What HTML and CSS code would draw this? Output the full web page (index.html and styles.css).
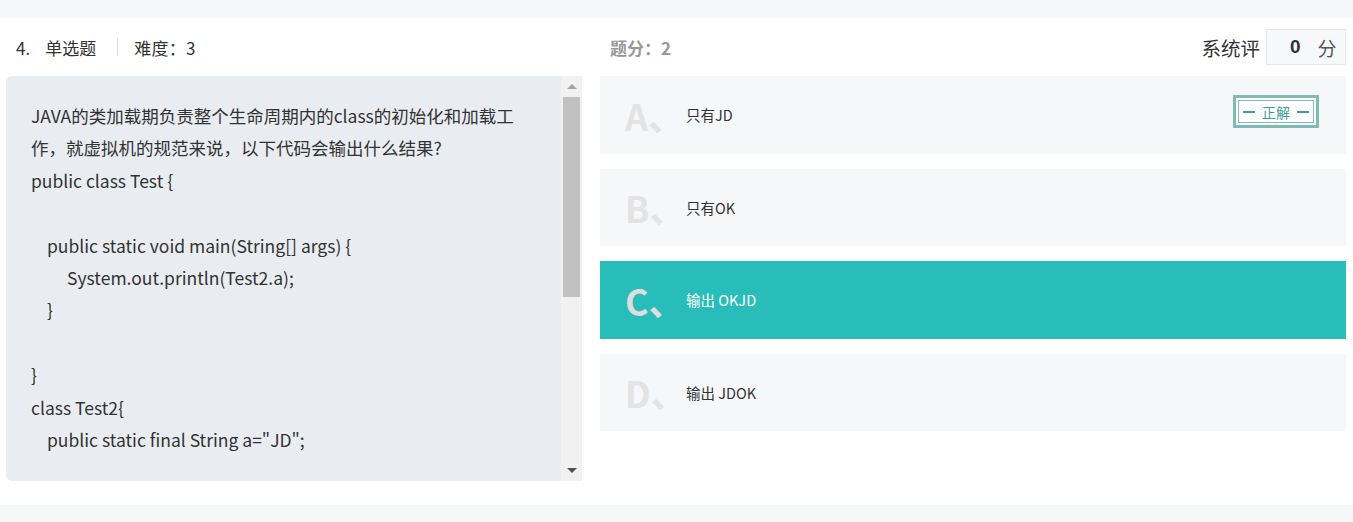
FILE: index.html
```html
<!DOCTYPE html>
<html lang="zh-CN">
<head>
<meta charset="utf-8">
<title>单选题</title>
<link rel="stylesheet" href="styles.css">
</head>
<body>
<div class="topband"></div>
<div class="main">
  <div class="head-left">
    <span class="num">4.</span>
    <span class="type">单选题</span>
    <span class="divider"></span>
    <span class="diff">难度：3</span>
  </div>
  <div class="head-right">
    <span class="score">题分：2</span>
    <div class="grade">
      <span class="grade-label">系统评</span>
      <div class="grade-box"><b>0</b><span>分</span></div>
    </div>
  </div>

  <div class="stem">
    <div class="stem-text">
      <p class="line">JAVA的类加载期负责整个生命周期内的class的初始化和加载工作，就虚拟机的规范来说，以下代码会输出什么结果?</p>
      <p class="line">public class Test {</p>
      <p class="line empty"></p>
      <p class="line in1">public static void main(String[] args) {</p>
      <p class="line in2">System.out.println(Test2.a);</p>
      <p class="line in1">}</p>
      <p class="line empty"></p>
      <p class="line">}</p>
      <p class="line">class Test2{</p>
      <p class="line in1">public static final String a="JD";</p>
    </div>
    <div class="scrollbar">
      <span class="arrow up"></span>
      <div class="track"><div class="thumb"></div></div>
      <span class="arrow down"></span>
    </div>
  </div>

  <div class="options">
    <div class="option">
      <span class="letter">A、</span>
      <span class="opt-text">只有JD</span>
      <div class="badge"><span class="dash"></span><span>正解</span><span class="dash"></span></div>
    </div>
    <div class="option">
      <span class="letter">B、</span>
      <span class="opt-text">只有OK</span>
    </div>
    <div class="option selected">
      <span class="letter">C、</span>
      <span class="opt-text">输出 OKJD</span>
    </div>
    <div class="option">
      <span class="letter">D、</span>
      <span class="opt-text">输出 JDOK</span>
    </div>
  </div>
</div>
<div class="bottomband"></div>
</body>
</html>
```

FILE: styles.css
```css
* { box-sizing: border-box; }
html, body { margin: 0; padding: 0; }
body {
  width: 1353px;
  height: 522px;
  overflow: hidden;
  background: #fff;
  font-family: "Microsoft YaHei", "Noto Sans CJK SC", sans-serif;
  color: #333;
  display: flex;
  flex-direction: column;
}
.topband { height: 18px; background: #f6f7f9; flex: none; }
.bottomband { height: 17px; background: #f6f7f9; margin-top: auto; flex: none; }

.main {
  display: grid;
  grid-template-columns: 576px 746px;
  grid-template-rows: 58px 405px;
  column-gap: 18px;
  padding: 0 7px 0 6px;
}

.head-left {
  display: flex;
  align-items: center;
  padding-left: 10px;
  font-size: 17px;
  color: #333;
}
.head-left .num { margin-right: 15px; }
.head-left .divider {
  width: 1px;
  height: 18px;
  background: #ddd;
  margin: 0 16px 0 21px;
}
.head-left .diff { letter-spacing: 0.3px; }
.head-right {
  display: flex;
  align-items: center;
  justify-content: space-between;
  padding-left: 10px;
}
.score { font-size: 17px; font-weight: bold; color: #999; }
.grade { display: flex; align-items: center; }
.grade-label { font-size: 19.5px; color: #333; margin-right: 6px; }
.grade-box {
  width: 80px;
  height: 36px;
  border: 1px solid #e6e6e6;
  background: #f7f8fa;
  display: flex;
  align-items: center;
  padding-left: 23px;
  font-size: 19px;
}
.grade-box b { font-family: "Liberation Sans", Arial, sans-serif; font-weight: bold; color: #333; margin-right: 17px; }
.grade-box span { color: #555; }

.stem {
  display: flex;
  background: #e9ecf1;
  border-radius: 6px 0 0 6px;
  overflow: hidden;
}
.stem-text {
  flex: 1;
  padding: 24px 40px 0 25px;
  font-size: 17.5px;
  line-height: 32.4px;
  color: #333;
}
.line { margin: 0; min-height: 32.4px; }
.in1 { padding-left: 16px; }
.in2 { padding-left: 36px; }

.scrollbar {
  width: 21px;
  flex: none;
  background: #f1f1f1;
  display: flex;
  flex-direction: column;
  align-items: center;
}
.arrow {
  width: 0;
  height: 0;
  border-left: 5px solid transparent;
  border-right: 5px solid transparent;
  flex: none;
}
.arrow.up { border-bottom: 5px solid #a3a3a3; margin: 8px 0 8px; }
.arrow.down { border-top: 5px solid #505050; margin: 0 0 8px; }
.track { flex: 1; width: 100%; display: flex; justify-content: center; }
.thumb { width: 17px; height: 200px; background: #c1c1c1; }

.options {
  display: flex;
  flex-direction: column;
  gap: 15px;
}
.option {
  position: relative;
  height: 77.5px;
  background: #f6f7f9;
  display: flex;
  align-items: center;
  padding-left: 25px;
}
.letter {
  width: 61px;
  flex: none;
  font-size: 36px;
  font-weight: bold;
  color: #e3e3e3;
  line-height: 1;
}
.opt-text { font-size: 14.5px; color: #333; }
.option.selected { background: #29bdb9; }
.option.selected .letter { color: #dedede; }
.option.selected .opt-text { color: #fff; }

.badge {
  position: absolute;
  right: 27px;
  top: 19px;
  width: 86px;
  height: 33px;
  border: 3px solid #7fbab6;
  box-shadow: inset 0 0 0 2px #fff, inset 0 0 0 3px #7fbab6;
  background: #fff;
  display: flex;
  align-items: center;
  justify-content: center;
  gap: 7px;
  font-size: 14px;
  color: #3f9d97;
}
.badge .dash { width: 12px; height: 2px; background: #3f9d97; }
```
